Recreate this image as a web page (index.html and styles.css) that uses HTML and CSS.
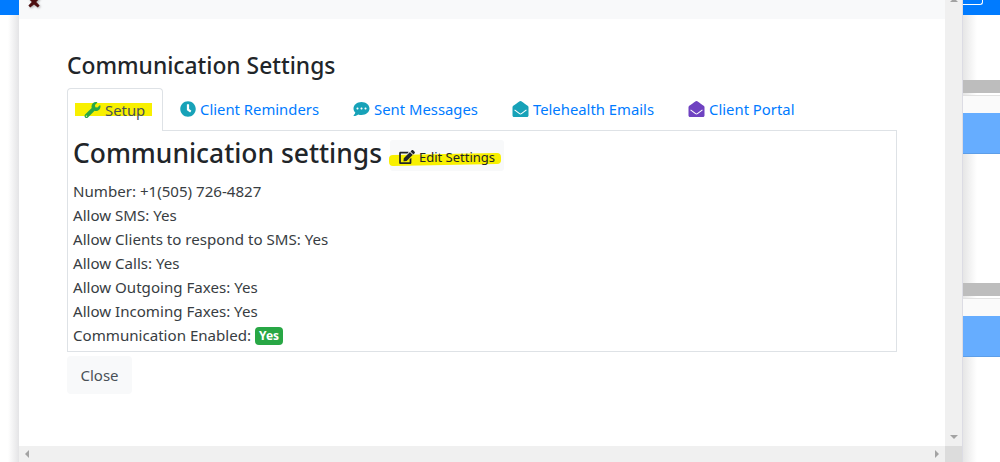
FILE: index.html
```html
<!DOCTYPE html>
<html lang="en">

<head>
    <meta charset="UTF-8">
    <meta name="viewport" content="width=device-width, initial-scale=1.0">
    <title>Communication Settings</title>
    <link rel="stylesheet" href="styles.css">
</head>

<body>
    <div class="page">
        <div class="side-left">
            <div class="navbar"></div>
        </div>

        <div class="modal-wrap">
            <div class="modal-main">
                <div class="modal-scroll">
                    <div class="modal-top">
                        <svg class="close-x" viewBox="0 0 12 12"><path d="M2.200 .6L6 3.600 9.800 .6l1.800 1.800L8.200 6l3.400 3.600-1.800 1.800L6 8.400l-3.800 3-1.800-1.800L3.800 6 .4 2.400z"/></svg>
                    </div>
                    <div class="modal-body">
                        <h2 class="modal-title">Communication Settings</h2>

                        <ul class="tabs">
                            <li class="tab active">
                                <span class="marker marker-setup"></span>
                                <svg class="icon icon-green" viewBox="0 0 512 512"><path d="M507.700 109.100c-2.200-9-13.500-12.100-20.100-5.500l-74.400 74.400-67.900-11.300-11.300-67.900 74.400-74.400c6.600-6.600 3.400-17.900-5.700-20.200-47.400-11.700-99.500 1-136.500 38-39.600 39.600-51 97-34.900 147.300L18.700 402.800c-25 25-25 65.500 0 90.500 25 25 65.500 25 90.500 0l213.200-213.200c50.300 16.200 107.700 4.700 147.400-34.900 37.100-37.100 49.700-89.300 37.900-136.100zM64 472c-13.300 0-24-10.700-24-24 0-13.300 10.700-24 24-24s24 10.700 24 24c0 13.300-10.700 24-24 24z"/></svg>
                                <span class="tab-text">Setup</span>
                            </li>
                            <li class="tab">
                                <svg class="icon icon-clock icon-teal" viewBox="0 0 512 512"><path d="M256 8C119 8 8 119 8 256s111 248 248 248 248-111 248-248S393 8 256 8zm57 350l-88-64c-3-2-5-6-5-10V116c0-7 5-12 12-12h48c7 0 12 5 12 12v142l64 46c5 4 7 11 3 17l-28 39c-4 5-11 7-18 3z"/></svg>
                                <span>Client Reminders</span>
                            </li>
                            <li class="tab">
                                <svg class="icon icon-teal" viewBox="0 0 512 512"><path d="M256 32C115 32 0 125 0 240c0 50 22 95 58 131-13 51-55 96-56 97-2 2-3 6-1 9s4 3 7 3c67 0 117-32 143-52 32 12 67 20 105 20 141 0 256-93 256-208S397 32 256 32zM128 272c-18 0-32-14-32-32s14-32 32-32 32 14 32 32-14 32-32 32zm128 0c-18 0-32-14-32-32s14-32 32-32 32 14 32 32-14 32-32 32zm128 0c-18 0-32-14-32-32s14-32 32-32 32 14 32 32-14 32-32 32z"/></svg>
                                <span>Sent Messages</span>
                            </li>
                            <li class="tab">
                                <svg class="icon icon-teal" viewBox="0 0 512 512"><path fill-rule="evenodd" d="M512 464c0 26.500-21.500 48-48 48H48c-26.500 0-48-21.500-48-48V200.700c0-14.700 6.700-28.600 18.300-37.700C43 143.800 63.400 127.900 181 42.600 198 30.200 231.700-.2 256 0c24.300-.2 58 30.200 75 42.600 117.600 85.300 138 101.200 162.700 120.400 11.600 9.100 18.300 23 18.300 37.700V464zM76 272l-20 27 160 118c24 17 56 17 80 0l160-118-20-27-160 118c-12 9-28 9-40 0z"/></svg>
                                <span>Telehealth Emails</span>
                            </li>
                            <li class="tab">
                                <svg class="icon icon-purple" viewBox="0 0 512 512"><path fill-rule="evenodd" d="M512 464c0 26.500-21.500 48-48 48H48c-26.500 0-48-21.500-48-48V200.700c0-14.700 6.700-28.600 18.300-37.700C43 143.800 63.400 127.900 181 42.600 198 30.200 231.700-.2 256 0c24.300-.2 58 30.200 75 42.600 117.600 85.300 138 101.200 162.700 120.400 11.600 9.100 18.300 23 18.300 37.700V464zM76 272l-20 27 160 118c24 17 56 17 80 0l160-118-20-27-160 118c-12 9-28 9-40 0z"/></svg>
                                <span>Client Portal</span>
                            </li>
                        </ul>

                        <div class="tab-panel">
                            <div class="panel-head">
                                <h1>Communication settings</h1>
                                <div class="edit-btn">
                                    <span class="marker marker-edit"></span>
                                    <svg class="icon icon-dark" viewBox="0 0 576 512"><path d="M402.600 83.200l90.200 90.200c3.800 3.800 3.800 10 0 13.800L274.400 405.600l-92.800 10.300c-12.400 1.400-22.900-9.100-21.500-21.500l10.300-92.800L388.800 83.200c3.800-3.800 10-3.800 13.800 0zm162-22.900l-48.800-48.800c-15.200-15.200-39.900-15.200-55.200 0l-35.400 35.400c-3.800 3.800-3.800 10 0 13.800l90.200 90.200c3.800 3.800 10 3.800 13.800 0l35.400-35.400c15.200-15.300 15.200-40 0-55.200zM384 346.200V448H64V128h229.800c3.200 0 6.200-1.300 8.500-3.500l40-40c7.600-7.600 2.200-20.500-8.500-20.500H48C21.500 64 0 85.500 0 112v352c0 26.500 21.500 48 48 48h352c26.500 0 48-21.500 48-48V306.200c0-10.700-12.900-16-20.500-8.500l-40 40c-2.200 2.300-3.500 5.300-3.500 8.500z"/></svg>
                                    <span class="edit-text">Edit Settings</span>
                                </div>
                            </div>
                            <div class="row">Number: +1(505) 726-4827</div>
                            <div class="row">Allow SMS: Yes</div>
                            <div class="row">Allow Clients to respond to SMS: Yes</div>
                            <div class="row">Allow Calls: Yes</div>
                            <div class="row">Allow Outgoing Faxes: Yes</div>
                            <div class="row">Allow Incoming Faxes: Yes</div>
                            <div class="row">Communication Enabled: <span class="badge">Yes</span></div>
                        </div>

                        <button class="close-btn">Close</button>
                    </div>
                </div>
                <div class="hbar">
                    <span class="arrow arrow-left"></span>
                    <span class="arrow arrow-right"></span>
                </div>
            </div>
            <div class="vbar">
                <span class="arrow arrow-up"></span>
                <span class="arrow arrow-down"></span>
                <span class="corner"></span>
            </div>
        </div>

        <div class="side-right">
            <div class="navbar">
                <div class="nav-toggle"></div>
            </div>
            <div class="grey-band"></div>
            <div class="pale-band"></div>
            <div class="blue-band"></div>
            <div class="grey-band grey-band-lower"></div>
            <div class="pale-band"></div>
            <div class="blue-band"></div>
        </div>
    </div>
</body>

</html>
```

FILE: styles.css
```css
* {
    box-sizing: border-box;
}

html,
body {
    margin: 0;
    height: 462px;
    overflow: hidden;
}

body {
    font-family: "Noto Sans", "Open Sans", sans-serif;
    font-size: 15px;
    color: #212529;
    background: #fff;
}

.page {
    display: flex;
    height: 462px;
}

/* page behind the modal */
.side-left {
    width: 19px;
    background: linear-gradient(to right, #fff 0, #fff 8px, #e4e4e6 100%);
}

.navbar {
    height: 15px;
    background: #007bff;
}

.nav-toggle {
    width: 20px;
    height: 5px;
    border-right: 1px solid #fff;
    border-bottom: 1px solid #fff;
    border-radius: 0 0 3px 0;
}

.side-right {
    flex: 1;
    background: linear-gradient(to right, #e6e6e6 0, #fff 14px);
}

.grey-band {
    height: 13px;
    margin-top: 65px;
    background: #bdbdbd;
}

.grey-band-lower {
    margin-top: 129px;
}

.pale-band {
    height: 18px;
    margin-top: 2px;
    border-top: 1px solid #e2e2e2;
    background: #fafafa;
}

.blue-band {
    height: 41px;
    background: #66adff;
    border-bottom: 1px solid #5d9ee8;
}

/* modal */
.modal-wrap {
    display: flex;
    width: 944px;
    border-right: 1px solid #dcdce4;
}

.modal-main {
    display: flex;
    flex-direction: column;
    width: 926px;
}

.modal-scroll {
    flex: 1;
    background: #fff;
}

.modal-top {
    display: flex;
    height: 19px;
    background: #f8f9fa;
}

.close-x {
    width: 12px;
    height: 12px;
    margin: -4px 0 0 9px;
    fill: #4d0f10;
    filter: drop-shadow(1px 1px 1px rgba(0, 0, 0, 0.3));
}

.modal-body {
    padding: 32px 48px 0;
}

.modal-title {
    margin: 0 0 8px;
    font-size: 22.8px;
    font-weight: 500;
    line-height: 29px;
}

.tabs {
    display: flex;
    margin: 0;
    padding: 0;
    list-style: none;
    height: 42px;
    font-size: 14.85px;
}

.tab {
    position: relative;
    display: flex;
    align-items: center;
    gap: 4px;
    padding: 0 17px;
    color: #007bff;
    white-space: nowrap;
}

.tab.active {
    width: 96px;
    height: 43px;
    padding: 0 16px;
    color: #495057;
    background: #fff;
    border: 1px solid #dee2e6;
    border-bottom: none;
    border-radius: 4px 4px 0 0;
    z-index: 1;
}

.icon {
    position: relative;
    width: 17px;
    height: 16px;
    flex: none;
}

.icon-clock { width: 16px; }
.icon-green { fill: #28a745; }
.icon-teal { fill: #17a2b8; }
.icon-purple { fill: #6f42c1; }
.icon-dark { fill: #212529; width: 16px; height: 14px; }

.tab-text,
.edit-text {
    position: relative;
}

.marker {
    position: absolute;
    background: #f8f000;
}

.marker-setup {
    left: 7px;
    top: 14px;
    width: 77px;
    height: 13px;
}

.marker-edit {
    left: -1px;
    top: 14px;
    width: 112px;
    height: 11px;
    border-radius: 4px;
    transform: rotate(-1deg);
}

.tab-panel {
    height: 222px;
    padding: 0 5px;
    border: 1px solid #dee2e6;
    font-size: 15.1px;
    line-height: 24px;
    color: #383d42;
}

.panel-head {
    display: flex;
    align-items: flex-start;
    height: 48px;
    color: #212529;
}

.panel-head h1 {
    margin: 0;
    font-size: 26.4px;
    font-weight: 500;
    line-height: 44px;
}

.edit-btn {
    position: relative;
    display: flex;
    align-items: center;
    gap: 4px;
    height: 31px;
    margin: 9px 0 0 8px;
    padding: 2px 9px 0;
    font-size: 13px;
    background: #f8f9fa;
    border-radius: 3px;
}

.row {
    height: 24px;
}

.badge {
    display: inline-block;
    padding: 0 4px;
    height: 18px;
    line-height: 18px;
    font-size: 12px;
    font-weight: 700;
    color: #fff;
    background: #28a745;
    border-radius: 4px;
    vertical-align: 1px;
}

.close-btn {
    display: block;
    width: 65px;
    height: 38px;
    margin-top: 4px;
    padding: 0;
    font: inherit;
    color: #495057;
    background: #f8f9fa;
    border: none;
    border-radius: 4px;
}

/* scrollbars */
.hbar {
    display: flex;
    align-items: center;
    justify-content: space-between;
    height: 16px;
    padding: 0 6px;
    background: #f0f0f0;
}

.vbar {
    position: relative;
    display: flex;
    flex-direction: column;
    align-items: center;
    justify-content: space-between;
    width: 17px;
    padding: 0 0 23px;
    background: #f0f0f0;
}

.corner {
    position: absolute;
    left: 0;
    bottom: 0;
    width: 17px;
    height: 16px;
    background: #dcdcdc;
}

.arrow {
    display: block;
    width: 0;
    height: 0;
    border: 4px solid transparent;
}

.arrow-left { border-right-color: #a3a3a3; border-left: none; }
.arrow-right { border-left-color: #a3a3a3; border-right: none; }
.arrow-up { margin-top: -2px; border-bottom-color: #a3a3a3; border-top: none; }
.arrow-down { border-top-color: #a3a3a3; border-bottom: none; }
```
